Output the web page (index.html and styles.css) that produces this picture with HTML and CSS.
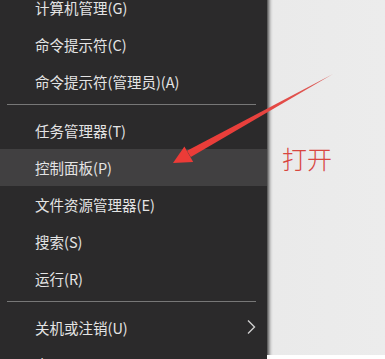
FILE: index.html
```html
<!DOCTYPE html>
<html lang="zh-CN">
<head>
    <meta charset="UTF-8">
    <meta name="viewport" content="width=device-width, initial-scale=1.0">
    <title>Win+X 菜单</title>
    <link rel="stylesheet" href="styles.css">
</head>
<body>
    <nav class="menu">
        <ul class="group">
            <li class="item">计算机管理(G)</li>
            <li class="item">命令提示符(C)</li>
            <li class="item">命令提示符(管理员)(A)</li>
        </ul>
        <div class="sep"></div>
        <ul class="group">
            <li class="item">任务管理器(T)</li>
            <li class="item active">控制面板(P)</li>
            <li class="item">文件资源管理器(E)</li>
            <li class="item">搜索(S)</li>
            <li class="item">运行(R)</li>
        </ul>
        <div class="sep"></div>
        <ul class="group">
            <li class="item has-sub">关机或注销(U)
                <svg class="chevron" width="10" height="16" viewBox="0 0 10 16">
                    <polyline points="2,1.5 8.5,8 2,14.5" fill="none" stroke="#cfcfcf" stroke-width="1.4"/>
                </svg>
            </li>
            <li class="item">桌面(D)</li>
        </ul>
    </nav>

    <section class="desktop"></section>

    <!-- 标注：箭头和文字 -->
    <svg class="arrow" width="385" height="359" viewBox="0 0 385 359">
        <defs>
            <linearGradient id="shaft" x1="333" y1="74" x2="173" y2="163" gradientUnits="userSpaceOnUse">
                <stop offset="0" stop-color="#d9605c"/>
                <stop offset="0.5" stop-color="#e8403c"/>
                <stop offset="1" stop-color="#ec3b37"/>
            </linearGradient>
        </defs>
        <polygon points="333,74 190.8,157 187,150.8" fill="url(#shaft)"/>
        <polygon points="173,163 193.2,162 184.4,146.4" fill="#ec3b37"/>
    </svg>
    <div class="note">打开</div>
</body>
</html>
```

FILE: styles.css
```css
html, body {
    margin: 0;
    padding: 0;
    height: 100%;
}
body {
    width: 385px;
    height: 359px;
    overflow: hidden;
    display: flex;
    background-color: #fff;
    font-family: "Noto Sans CJK SC", "Liberation Sans", sans-serif;
    position: relative;
}

.menu {
    width: 267px;
    height: 359px;
    overflow: hidden;
    flex: none;
    background-color: #2b2a2b;
    color: #e4e4e4;
    font-size: 14.5px;
}
.group {
    list-style: none;
    margin: 0;
    padding: 0;
}
.group:first-child { margin-top: -11.5px; }
.item {
    height: 37px;
    line-height: 37px;
    padding-left: 35px;
    padding-right: 11px;
    display: flex;
    align-items: center;
    justify-content: space-between;
}
.item.active { background-color: #414041; }
.chevron { display: block; }

.sep {
    height: 1px;
    margin: 4px 11px 7px 7px;
    background-color: #777;
}

.desktop {
    flex: 1;
    height: 355px;
    background: linear-gradient(to right, #4e4e4e 0, #9a9a9a 2px, #d6d6d6 4px, #eaeaea 6px, #ececec 100%);
}

.arrow {
    position: absolute;
    left: 0;
    top: 0;
    pointer-events: none;
}
.note {
    position: absolute;
    left: 282px;
    top: 144px;
    font-size: 25px;
    line-height: 28px;
    font-weight: 300;
    color: #d8463f;
}
```
